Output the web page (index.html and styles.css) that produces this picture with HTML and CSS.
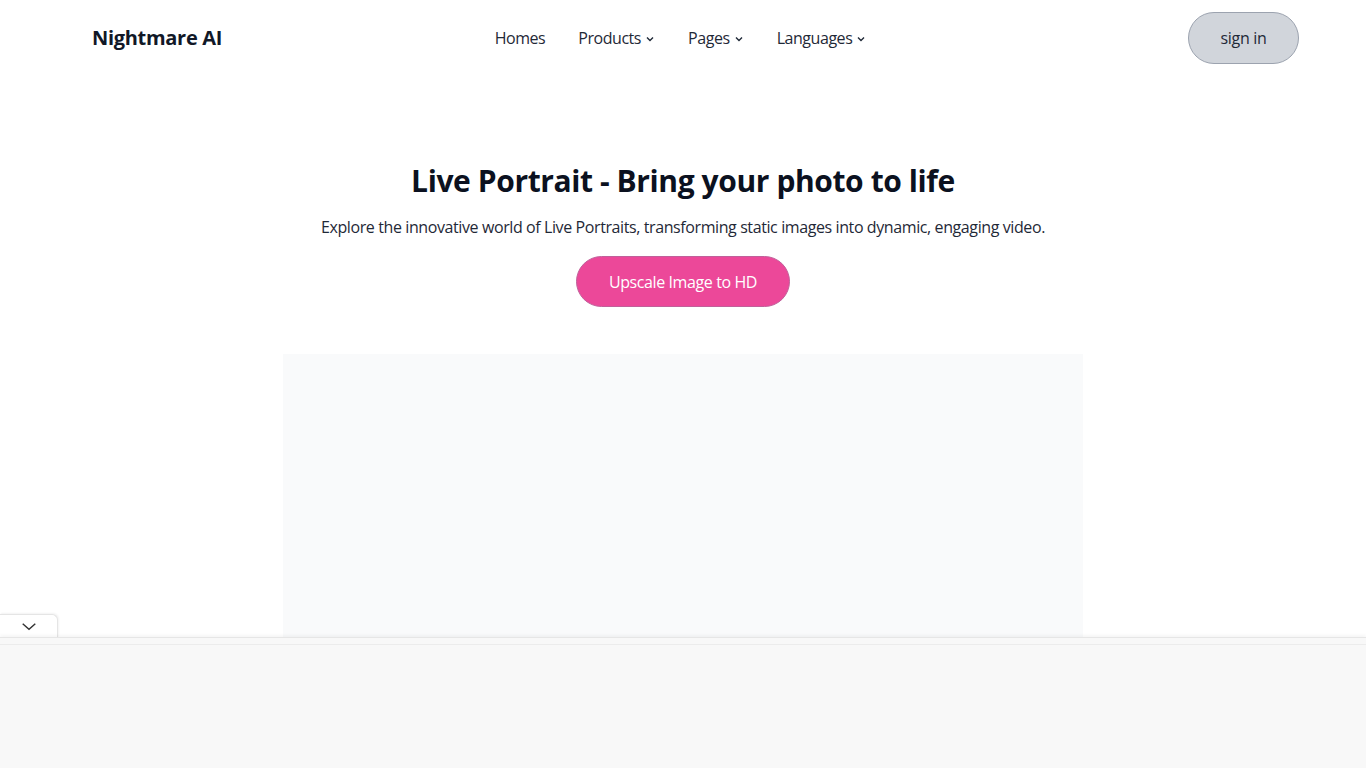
FILE: index.html
```html
<!DOCTYPE html>
<html lang="en">
<head>
<meta charset="utf-8">
<title>Nightmare AI - Live Portrait</title>
<link rel="stylesheet" href="styles.css">
</head>
<body>
<header class="header">
  <a class="logo" href="#">Nightmare AI</a>
  <nav class="nav">
    <a class="nav-item" href="#">Homes</a>
    <a class="nav-item" href="#">Products <svg class="chev" viewBox="0 0 10 10"><path d="M2 3.5 5 6.5 8 3.5"/></svg></a>
    <a class="nav-item" href="#">Pages <svg class="chev" viewBox="0 0 10 10"><path d="M2 3.5 5 6.5 8 3.5"/></svg></a>
    <a class="nav-item" href="#">Languages <svg class="chev" viewBox="0 0 10 10"><path d="M2 3.5 5 6.5 8 3.5"/></svg></a>
  </nav>
  <div class="actions"><button class="signin">sign in</button></div>
</header>
<main class="hero">
  <h1 class="title">Live Portrait - Bring your photo to life</h1>
  <p class="subtitle">Explore the innovative world of Live Portraits, transforming static images into dynamic, engaging video.</p>
  <button class="cta">Upscale Image to HD</button>
  <div class="panel"></div>
</main>
<div class="adbar">
  <div class="adtab"><svg viewBox="0 0 20 12" class="adchev"><path d="M3 3 10 9 17 3"/></svg></div>
  <div class="adbody"></div>
</div>
</body>
</html>
```
FILE: styles.css
```css
* { box-sizing: border-box; }
html, body { margin: 0; padding: 0; }
body {
  font-family: "Open Sans", "Liberation Sans", sans-serif;
  color: #111827;
  background: #fff;
  height: 768px;
  overflow: hidden;
}
.header {
  height: 76px;
  padding: 0 67px 0 92px;
  display: grid;
  grid-template-columns: 1fr auto 1fr;
  align-items: center;
}
.logo {
  font-size: 20px;
  font-weight: 700;
  color: #111827;
  text-decoration: none;
  letter-spacing: -0.3px;
  justify-self: start;
  margin-top: -1px;
}
.nav {
  display: flex;
  gap: 33px;
  padding-right: 30px;
}
.nav-item {
  font-size: 16px;
  letter-spacing: -0.45px;
  color: #1f2937;
  text-decoration: none;
  display: flex;
  align-items: center;
  gap: 4px;
}
.chev { width: 10px; height: 10px; fill: none; stroke: #1f2937; stroke-width: 1.4; margin-top: 1px; }
.actions { justify-self: end; }
.signin {
  width: 111px;
  height: 52px;
  border-radius: 26px;
  background: #d1d5db;
  border: 1px solid #9ca3af;
  font-family: inherit;
  font-size: 16px;
  letter-spacing: -0.3px;
  color: #1f2937;
}
.hero {
  display: flex;
  flex-direction: column;
  align-items: center;
  padding-top: 85px;
}
.title {
  margin: 0;
  font-size: 30px;
  letter-spacing: -0.4px;
  font-weight: 700;
  line-height: 40px;
  color: #0b1120;
}
.subtitle {
  margin: 14px 0 0;
  font-size: 16px;
  letter-spacing: -0.4px;
  line-height: 24px;
  color: #1f2937;
}
.cta {
  margin-top: 17px;
  width: 214px;
  height: 51px;
  border-radius: 26px;
  background: #ec4899;
  border: 1px solid #c0609a;
  color: #fff;
  font-family: inherit;
  font-size: 16px;
  letter-spacing: -0.4px;
}
.panel {
  margin-top: 47px;
  width: 800px;
  height: 300px;
  background: #f9fafb;
}
.adbar {
  position: fixed;
  left: 0;
  right: 0;
  bottom: 0;
  height: 154px;
}
.adtab {
  position: absolute;
  left: 0;
  top: 0;
  width: 58px;
  height: 24px;
  background: #fff;
  border: 1px solid #e5e5e5;
  border-bottom: none;
  border-left: none;
  border-radius: 0 6px 0 0;
  display: flex;
  align-items: center;
  justify-content: center;
  box-shadow: 1px -1px 2px rgba(0,0,0,0.05);
}
.adchev { width: 18px; height: 11px; fill: none; stroke: #333; stroke-width: 1.6; }
.adbody {
  position: absolute;
  left: 0;
  right: 0;
  top: 23px;
  bottom: 0;
  background: #f8f8f8;
  border-top: 1px solid #e6e6e6;
  box-shadow: 0 -2px 3px rgba(0,0,0,0.04);
}
.adbody::before {
  content: "";
  position: absolute;
  left: 0;
  right: 0;
  top: 6px;
  height: 1px;
  background: #ececec;
}
```
